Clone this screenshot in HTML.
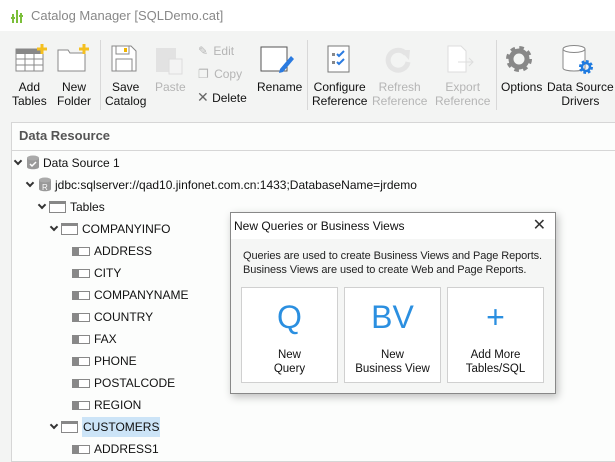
<!DOCTYPE html>
<html><head><style>
*{margin:0;padding:0;box-sizing:border-box}
body{width:615px;height:460px;overflow:hidden;background:#f3f4f3;font-family:"Liberation Sans",sans-serif;font-size:12px;color:#111;position:relative}
.abs{position:absolute}
.title{left:0;top:0;width:615px;height:31px;background:#fff;color:#888;font-size:13px}
.btn{position:absolute;text-align:center;font-size:12px;line-height:14px;top:80px}
.dis{color:#b5b5b5}
.sep{position:absolute;top:40px;width:1px;height:70px;background:#d8d8d8}
.panel{left:11px;top:122px;width:610px;height:340px;background:#fcfdfc;border:1px solid #d6d6d6}
.row{position:absolute;height:18px;line-height:18px;font-size:12px;white-space:nowrap}
.chev{position:absolute;width:6px;height:6px;border-right:2px solid #333;border-bottom:2px solid #333;transform:rotate(45deg)}
.tbl{display:inline-block;width:17px;height:12px;border:1px solid #888;border-top:3px solid #888;vertical-align:-2px;margin-right:4px;background:#fff}
.col{display:inline-block;width:18px;height:9px;border:1px solid #888;border-left:7px solid #888;vertical-align:-1px;margin-right:4px;background:#fff}
.card{position:absolute;top:287px;width:97px;height:96px;background:#fff;border:1px solid #d0d0d0;text-align:center;font-size:11.5px;line-height:14px}
.card .big{color:#2b8fe0;font-size:32px;line-height:34px;margin-top:12px;margin-bottom:14px}
</style></head><body>
<div class="abs title">
 <svg class="abs" style="left:11px;top:8px" width="14" height="16"><rect x="1" y="6" width="2" height="9" fill="#7bbf3a"/><rect x="5" y="2" width="2" height="13" fill="#7bbf3a"/><rect x="9" y="5" width="2" height="10" fill="#7bbf3a"/><rect x="0" y="9" width="4" height="2" fill="#7bbf3a"/><rect x="8" y="7" width="4" height="2" fill="#7bbf3a"/></svg>
 <span class="abs" style="left:31px;top:8px">Catalog Manager [SQLDemo.cat]</span>
</div>
<svg class="abs" style="left:15px;top:44px" width="32" height="30"><rect x="1" y="5" width="27" height="22" fill="#fff" stroke="#888"/><rect x="1" y="5" width="27" height="5" fill="#888"/><path d="M1 15H28M1 21H28M10 10V27M19 10V27" stroke="#888"/><path d="M27 0V10M22 5H32" stroke="#f5c020" stroke-width="3"/></svg>
<svg class="abs" style="left:57px;top:44px" width="34" height="30"><path d="M1 6H11L13 9H28V27H1Z" fill="#fff" stroke="#888"/><path d="M27 0V10M22 5H32" stroke="#f5c020" stroke-width="3"/></svg>
<svg class="abs" style="left:111px;top:45px" width="26" height="28"><path d="M1 1H20L25 6V26H1Z" fill="#fff" stroke="#888"/><rect x="5" y="1" width="13" height="8" fill="none" stroke="#888"/><rect x="13" y="3" width="3" height="4" fill="#f0b400"/><rect x="5" y="14" width="16" height="12" fill="none" stroke="#888"/></svg>
<svg class="abs" style="left:154px;top:45px" width="30" height="30"><rect x="2" y="3" width="20" height="24" fill="#e2e2e2"/><rect x="15" y="14" width="13" height="15" fill="#f3f3f3" stroke="#ddd"/></svg>
<div class="btn" style="left:12px">Add<br>Tables</div>
<div class="btn" style="left:57px">New<br>Folder</div>
<div class="sep" style="left:100px"></div>
<div class="btn" style="left:105px">Save<br>Catalog</div>
<div class="btn dis" style="left:155px">Paste</div>
<div class="abs dis" style="left:198px;top:44px">✎ <span style="margin-left:2px">Edit</span></div>
<div class="abs dis" style="left:198px;top:67px">❐ <span style="margin-left:2px">Copy</span></div>
<div class="abs" style="left:197px;top:89px"><span style="color:#666;font-size:14px">✕</span> Delete</div>
<svg class="abs" style="left:260px;top:45px" width="36" height="30"><rect x="1" y="2" width="26" height="24" fill="#fff" stroke="#555"/><path d="M20 24L31 11L34 14L23 27L19 28Z" fill="#2b7be0"/></svg>
<div class="btn" style="left:257px">Rename</div>
<div class="sep" style="left:307px"></div>
<svg class="abs" style="left:327px;top:45px" width="24" height="30"><rect x="1" y="1" width="21" height="26" fill="#fff" stroke="#777"/><rect x="5" y="8" width="3" height="3" fill="#888"/><rect x="5" y="16" width="3" height="3" fill="#888"/><path d="M10 9L12 11L17 6M10 17L12 19L17 14" stroke="#2b7be0" stroke-width="2" fill="none"/></svg>
<div class="btn" style="left:312px">Configure<br>Reference</div>
<svg class="abs" style="left:384px;top:46px" width="28" height="28"><path d="M22 8A10 10 0 1 0 24 16" stroke="#e4e4e4" stroke-width="5" fill="none"/><path d="M16 4L26 4L25 14Z" fill="#e4e4e4"/></svg>
<div class="btn dis" style="left:372px">Refresh<br>Reference</div>
<svg class="abs" style="left:446px;top:45px" width="30" height="30"><path d="M2 1H15L20 6V27H2Z" fill="#fff" stroke="#ddd"/><path d="M12 17H27M23 13L27 17L23 21" stroke="#ddd" fill="none"/></svg>
<div class="btn dis" style="left:435px">Export<br>Reference</div>
<div class="sep" style="left:496px"></div>
<svg class="abs" style="left:505px;top:45px" width="30" height="30"><circle cx="14" cy="14" r="10" fill="none" stroke="#888" stroke-width="6" stroke-dasharray="4 3.85"/><circle cx="14" cy="14" r="8" fill="none" stroke="#888" stroke-width="5"/></svg>
<div class="btn" style="left:501px">Options</div>
<svg class="abs" style="left:560px;top:44px" width="36" height="32"><path d="M3 5V24C3 28 25 28 25 24V5" fill="#fff" stroke="#888"/><ellipse cx="14" cy="5" rx="11" ry="3.5" fill="#fff" stroke="#888"/><circle cx="26" cy="23" r="5.5" fill="none" stroke="#1f7be0" stroke-width="3" stroke-dasharray="2.5 1.8"/><circle cx="26" cy="23" r="4" fill="none" stroke="#1f7be0" stroke-width="2.5"/></svg>
<div class="btn" style="left:547px">Data Source<br>Drivers</div>

<div class="abs panel"></div>
<div class="abs" style="left:12px;top:150px;width:603px;height:1px;background:#d6d6d6"></div>
<div class="abs" style="left:19px;top:128px;font-size:13px;font-weight:bold;color:#555">Data Resource</div>

<div class="chev" style="left:15px;top:158px"></div>
<div class="row" style="left:26px;top:154px"><svg width="14" height="15" style="vertical-align:-3px;margin-right:3px"><path d="M1 3V12C1 15 13 15 13 12V3" fill="#999"/><ellipse cx="7" cy="3" rx="6" ry="2.5" fill="#aaa"/><path d="M4 9L6 11L10 7" stroke="#fff" stroke-width="1.5" fill="none"/></svg>Data Source 1</div>
<div class="chev" style="left:27px;top:180px"></div>
<div class="row" style="left:38px;top:176px"><svg width="14" height="15" style="vertical-align:-3px;margin-right:3px"><path d="M1 3V12C1 15 13 15 13 12V3" fill="#999"/><ellipse cx="7" cy="3" rx="6" ry="2.5" fill="#aaa"/><text x="4" y="13" font-size="8" fill="#fff" font-family="Liberation Sans">R</text></svg>jdbc:sqlserver://qad10.jinfonet.com.cn:1433;DatabaseName=jrdemo</div>
<div class="chev" style="left:39px;top:202px"></div>
<div class="row" style="left:49px;top:198px"><span class="tbl"></span>Tables</div>
<div class="chev" style="left:51px;top:224px"></div>
<div class="row" style="left:61px;top:220px"><span class="tbl"></span>COMPANYINFO</div>
<div class="row" style="left:72px;top:242px"><span class="col"></span>ADDRESS</div>
<div class="row" style="left:72px;top:264px"><span class="col"></span>CITY</div>
<div class="row" style="left:72px;top:286px"><span class="col"></span>COMPANYNAME</div>
<div class="row" style="left:72px;top:308px"><span class="col"></span>COUNTRY</div>
<div class="row" style="left:72px;top:330px"><span class="col"></span>FAX</div>
<div class="row" style="left:72px;top:352px"><span class="col"></span>PHONE</div>
<div class="row" style="left:72px;top:374px"><span class="col"></span>POSTALCODE</div>
<div class="row" style="left:72px;top:396px"><span class="col"></span>REGION</div>
<div class="chev" style="left:51px;top:422px"></div>
<div class="row" style="left:61px;top:418px"><span class="tbl"></span><span style="background:#cce4f7;padding:3px 1px">CUSTOMERS</span></div>
<div class="row" style="left:72px;top:440px"><span class="col"></span>ADDRESS1</div>

<div class="abs" style="left:230px;top:212px;width:326px;height:182px;background:#f5f6f5;border:1px solid #888;box-shadow:2px 3px 8px rgba(0,0,0,.25)">
 <div style="height:26px;background:#fff;line-height:26px;padding-left:3px;font-size:12px">New Queries or Business Views<span style="position:absolute;right:9px;top:0;font-size:16px;color:#333">✕</span></div>
 <div style="position:absolute;left:12px;top:36px;font-size:11px;line-height:14px;color:#222;white-space:nowrap;letter-spacing:-0.1px">Queries are used to create Business Views and Page Reports.<br>Business Views are used to create Web and Page Reports.</div>
</div>
<div class="card" style="left:241px"><div class="big">Q</div>New<br>Query</div>
<div class="card" style="left:344px"><div class="big">BV</div>New<br>Business View</div>
<div class="card" style="left:447px"><div class="big" style="font-weight:300">+</div>Add More<br>Tables/SQL</div>
</body></html>
